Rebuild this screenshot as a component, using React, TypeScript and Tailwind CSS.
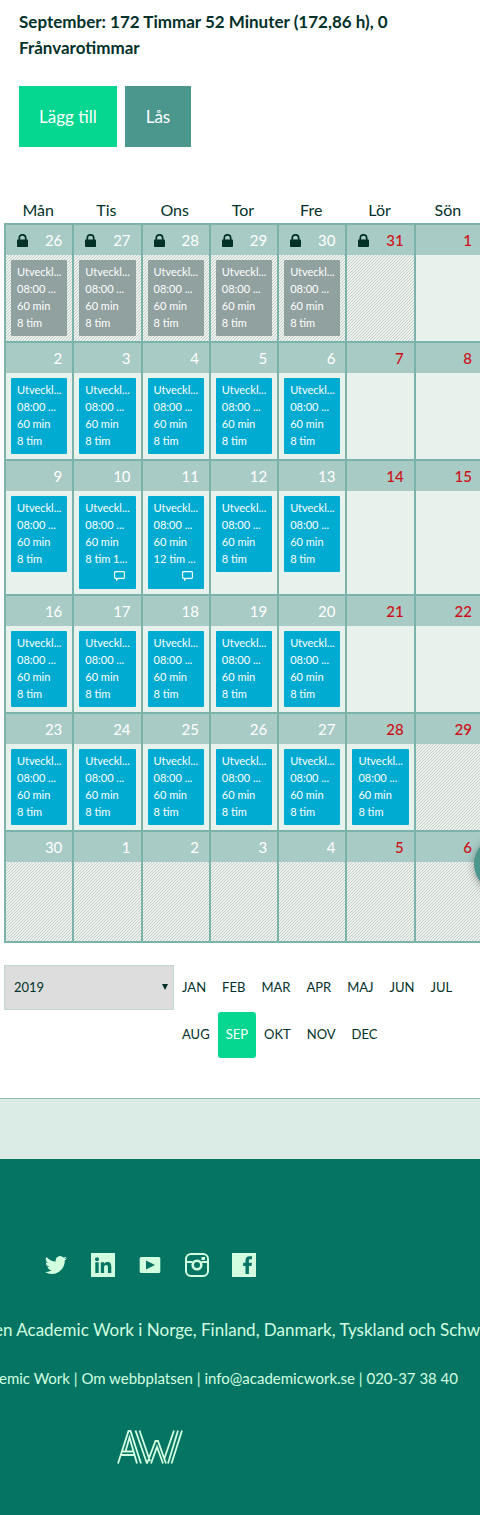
import React from 'react';

type Kind = 'locked' | 'open' | 'outside';
interface Entry { tone: 'gray' | 'blue'; hours: string; comment?: boolean }
interface Day { n: number; kind: Kind; red?: boolean; lock?: boolean; entry?: Entry }

const weekdays = ['Mån', 'Tis', 'Ons', 'Tor', 'Fre', 'Lör', 'Sön'];
const months = ['JAN', 'FEB', 'MAR', 'APR', 'MAJ', 'JUN', 'JUL', 'AUG', 'SEP', 'OKT', 'NOV', 'DEC'];

const work = (n: number, hours = '8 tim', comment = false): Day => ({ n, kind: 'open', entry: { tone: 'blue', hours, comment } });
const locked = (n: number): Day => ({ n, kind: 'locked', lock: true, entry: { tone: 'gray', hours: '8 tim' } });
const free = (n: number): Day => ({ n, kind: 'open', red: true });
const outside = (n: number, red = false): Day => ({ n, kind: 'outside', red });

const weeks: Day[][] = [
  [locked(26), locked(27), locked(28), locked(29), locked(30), { n: 31, kind: 'locked', red: true, lock: true }, free(1)],
  [work(2), work(3), work(4), work(5), work(6), free(7), free(8)],
  [work(9), work(10, '8 tim 1...', true), work(11, '12 tim ...', true), work(12), work(13), free(14), free(15)],
  [work(16), work(17), work(18), work(19), work(20), free(21), free(22)],
  [work(23), work(24), work(25), work(26), work(27), { ...work(28), red: true }, outside(29, true)],
  [outside(30), outside(1), outside(2), outside(3), outside(4), outside(5, true), outside(6, true)],
];

function LockIcon() {
  return (
    <svg viewBox="0 0 11 13" className="h-[13px] w-[11px]" aria-label="Låst">
      <path d="M2.3 6V4a3.2 3.2 0 0 1 6.4 0v2" fill="none" stroke="#02312a" strokeWidth="1.7" />
      <rect x="0" y="5.4" width="11" height="7.6" rx="0.8" fill="#02312a" />
    </svg>
  );
}

function CommentIcon() {
  return (
    <svg viewBox="0 0 11 10" className="h-[10px] w-[11px]" aria-label="Kommentar">
      <path d="M1.5.6h8q.9 0 .9.9v5q0 .9-.9.9H4.2L2.6 9V7.4H1.5q-.9 0-.9-.9v-5q0-.9.9-.9z" fill="none" stroke="#fff" strokeWidth="1.1" />
    </svg>
  );
}

function EntryCard({ entry }: { entry: Entry }) {
  const tone = entry.tone === 'gray' ? 'bg-[#91a19f]' : 'bg-[#00abd2]';
  return (
    <div className={`rounded-[1px] pt-[3px] pb-[5px] pl-1.5 text-[11px] leading-[17px] whitespace-nowrap text-white ${tone}`}>
      <p>Utveckl...</p>
      <p>08:00 ...</p>
      <p>60 min</p>
      <p>{entry.hours}</p>
      {entry.comment && <div className="flex h-[17px] items-center justify-end pr-[11px]"><CommentIcon /></div>}
    </div>
  );
}

function DayCell({ day }: { day: Day }) {
  const fill = day.kind === 'open'
    ? 'bg-[#e8f2ec]'
    : 'bg-[linear-gradient(135deg,#edf2ee_40%,#c3cfc9_40%,#c3cfc9_60%,#edf2ee_60%)] bg-size-[3px_3px]';
  return (
    <td className={`border-t-2 border-l-2 border-[#7bb2a9] p-0 align-top ${fill}`}>
      <div className={`flex h-[30px] items-center justify-between bg-[#a9cbc5] pr-2.5 pl-[11px] text-[15px] ${day.red ? 'font-medium text-[#cc0f16]' : 'text-white'}`}>
        <span>{day.lock && <LockIcon />}</span>
        <span>{day.n}</span>
      </div>
      <div className="min-h-[79px] p-[5px]">{day.entry && <EntryCard entry={day.entry} />}</div>
    </td>
  );
}

function Social() {
  const link = 'flex size-6 items-center justify-center';
  return (
    <nav className="flex gap-[23px] pl-11 text-[#d1ffe0]" aria-label="Sociala medier">
      <a href="#twitter" aria-label="Twitter" className={link}>
        <svg viewBox="0 0 24 24" className="size-[22px]" fill="currentColor"><path d="M23.95 4.57a10 10 0 0 1-2.82.77 4.96 4.96 0 0 0 2.16-2.72c-.95.55-2 .95-3.13 1.18a4.92 4.92 0 0 0-8.38 4.48C7.69 8.1 4.07 6.13 1.64 3.16a4.92 4.92 0 0 0 1.52 6.57 4.9 4.9 0 0 1-2.23-.61v.06a4.92 4.92 0 0 0 3.95 4.83 5 5 0 0 1-2.21.08 4.94 4.94 0 0 0 4.6 3.42A9.87 9.87 0 0 1 0 19.54a13.99 13.99 0 0 0 7.55 2.21c9.05 0 14-7.5 14-13.98 0-.21 0-.42-.02-.63a9.94 9.94 0 0 0 2.46-2.55z" /></svg>
      </a>
      <a href="#linkedin" aria-label="LinkedIn" className={link}>
        <svg viewBox="0 0 24 24" className="size-6"><path fill="currentColor" d="M0 0h24v24H0z" /><g fill="#057463"><circle cx="6" cy="6.2" r="2" /><path d="M4.3 9.3h3.4V20H4.3zM9.8 9.3H13v1.5c.6-1 1.8-1.8 3.4-1.8 3.2 0 3.9 2.1 3.9 5V20h-3.4v-5.3c0-1.4-.2-2.8-1.8-2.8-1.7 0-2 1.3-2 2.7V20H9.8z" /></g></svg>
      </a>
      <a href="#youtube" aria-label="YouTube" className={link}>
        <svg viewBox="0 0 24 24" className="size-6"><rect x="1.7" y="4" width="20.6" height="16" rx="1.5" fill="currentColor" /><path d="M8 7.6v8.8l9-4.4z" fill="#057463" /></svg>
      </a>
      <a href="#instagram" aria-label="Instagram" className={link}>
        <svg viewBox="0 0 24 24" className="size-6" fill="none" stroke="currentColor" strokeWidth="2"><rect x="1" y="1" width="22" height="22" rx="5" /><path d="M1 9h6.5M16.5 9H23" /><circle cx="12" cy="12" r="4.3" strokeWidth="2.6" /><rect x="16.5" y="4" width="3.5" height="3" fill="currentColor" stroke="none" /></svg>
      </a>
      <a href="#facebook" aria-label="Facebook" className={link}>
        <svg viewBox="0 0 24 24" className="size-6"><path fill="currentColor" d="M0 0h24v24H0z" /><path fill="#057463" d="M13.5 21v-8h-2.3V9.7h2.3V7.5c0-2.7 1.5-4.2 4-4.2H20v3h-1.700c-1.200 0-1.400.5-1.400 1.500v1.900h3l-.4 3.300h-2.600v8z" /></svg>
      </a>
    </nav>
  );
}

function Logo() {
  return (
    <svg viewBox="0 0 66 34" className="h-[34px] w-[66px]" fill="none" stroke="#d1ffe0" strokeWidth="1.8" aria-label="Academic Work">
      <path d="M1 33.5 11.5 1h2L24 33.5M4.5 25H17M5.5 21.5H15.5M8.5 21.5 12.5 7.5 20 33.5M18.5 .5 30 33.5M22.5 .5 33 31M30 33.5 38.5 11h2.5L49 33.5M34 33.5 40 17 46 33.5M47 29.5 57 .5M51 33.5 61 .5M54.5 33.5 65 .5" />
    </svg>
  );
}

export default function App() {
  return (
    <div className="relative overflow-hidden bg-white font-['Lato',sans-serif] text-[#02312a]">
      <main>
        <h1 className="px-[19px] pt-[9px] text-[17px] leading-[26px] font-bold">
          September: 172 Timmar 52 Minuter (172,86 h), 0 Frånvarotimmar
        </h1>
        <div className="flex gap-2 px-[19px] pt-[25px] text-[17px] text-white">
          <button type="button" className="h-[61px] bg-[#05d690] px-5">Lägg till</button>
          <button type="button" className="h-[61px] bg-[#4b978d] px-[21px]">Lås</button>
        </div>
        <table className="mt-[50px] ml-1 w-[calc(100%-2px)] table-fixed border-separate border-spacing-0">
          <thead>
            <tr>{weekdays.map((d) => <th key={d} scope="col" className="h-[26px] p-0 text-base leading-[26px] font-normal">{d}</th>)}</tr>
          </thead>
          <tbody className="[&>tr:last-child>td]:border-b-2">
            {weeks.map((week, i) => <tr key={i}>{week.map((day, j) => <DayCell key={j} day={day} />)}</tr>)}
          </tbody>
        </table>
        <div className="mt-[22px] flex items-start pl-1">
          <div className="relative w-[170px] shrink-0">
            <select aria-label="År" defaultValue="2019" className="h-[45px] w-full appearance-none border border-[#bfd8d2] bg-[#ddd] pl-[9px] text-[13px]">
              <option>2019</option>
            </select>
            <svg viewBox="0 0 6 6" className="pointer-events-none absolute top-[19px] right-1.5 size-1.5" fill="#02312a"><path d="M0 0h6L3 6z" /></svg>
          </div>
          <div className="flex flex-wrap gap-y-px text-[13px]">
            {months.map((m) => (
              <button key={m} type="button" className={`h-[46px] rounded-[3px] px-2 ${m === 'SEP' ? 'bg-[#05d690] text-white' : ''}`}>{m}</button>
            ))}
          </div>
        </div>
      </main>
      <button type="button" aria-label="Hjälp" className="absolute top-[836px] -right-[50px] size-14 rounded-full bg-[#4b978d] shadow-[0_2px_8px_rgba(0,0,0,0.35)]" />
      <div className="mt-10 h-[61px] border-t border-[#8dbfb5] bg-[#daece5]" />
      <footer className="bg-[#057463] pt-[94px] pb-[51px] text-[#d1ffe0]">
        <Social />
        <p className="mt-[41px] -ml-1.5 text-[17px] leading-6 whitespace-nowrap">en Academic Work i Norge, Finland, Danmark, Tyskland och Schweiz</p>
        <p className="mt-6 -ml-px text-[15px] leading-6 whitespace-nowrap">
          emic Work | <a href="#om">Om webbplatsen</a> | <a href="mailto:info@academicwork.se">info@academicwork.se</a> | 020-37 38 40
        </p>
        <div className="mt-10 pl-[117px]"><Logo /></div>
      </footer>
    </div>
  );
}
